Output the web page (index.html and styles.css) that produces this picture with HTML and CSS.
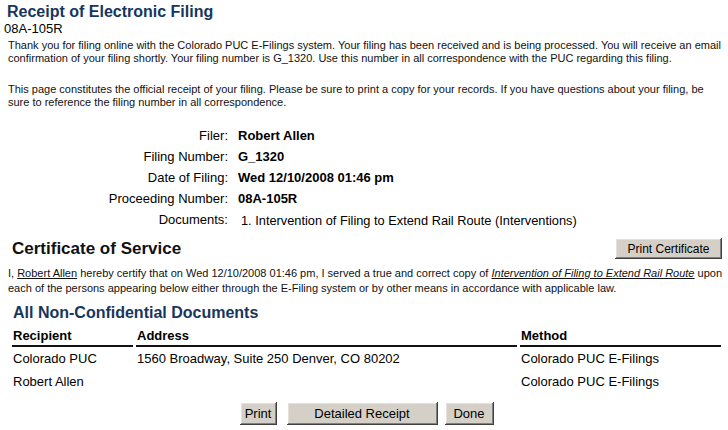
FILE: index.html
```html
<!DOCTYPE html>
<html lang="en">
<head>
    <meta charset="UTF-8">
    <title>Receipt of Electronic Filing</title>
    <link rel="stylesheet" href="styles.css">
</head>
<body>
    <div class="page">
        <h1 class="title">Receipt of Electronic Filing</h1>
        <div class="proceeding">08A-105R</div>

        <p class="note">Thank you for filing online with the Colorado PUC E-Filings system. Your filing has been received and is being processed. You will receive an email confirmation of your filing shortly. Your filing number is G_1320. Use this number in all correspondence with the PUC regarding this filing.</p>
        <p class="note">This page constitutes the official receipt of your filing. Please be sure to print a copy for your records. If you have questions about your filing, be sure to reference the filing number in all correspondence.</p>

        <div class="details">
            <span class="label">Filer:</span>
            <span class="value">Robert Allen</span>
            <span class="label">Filing Number:</span>
            <span class="value">G_1320</span>
            <span class="label">Date of Filing:</span>
            <span class="value">Wed 12/10/2008 01:46 pm</span>
            <span class="label">Proceeding Number:</span>
            <span class="value">08A-105R</span>
            <span class="label">Documents:</span>
            <span class="value doc">1. Intervention of Filing to Extend Rail Route (Interventions)</span>
        </div>

        <div class="cert-head">
            <h2 class="cert-title">Certificate of Service</h2>
            <button class="btn btn-cert">Print Certificate</button>
        </div>
        <p class="note cert-text">I, <u>Robert Allen</u> hereby certify that on Wed 12/10/2008 01:46 pm, I served a true and correct copy of <u><i>Intervention of Filing to Extend Rail Route</i></u> <span>upon </span><span>each of the persons appearing below either through the E-Filing system or by other means in accordance with applicable law.</span></p>

        <h2 class="section">All Non-Confidential Documents</h2>
        <table class="recipients">
            <thead>
                <tr>
                    <th class="col-name">Recipient</th>
                    <th class="col-addr">Address</th>
                    <th class="col-method">Method</th>
                </tr>
            </thead>
            <tbody>
                <tr>
                    <td>Colorado PUC</td>
                    <td>1560 Broadway, Suite 250 Denver, CO 80202</td>
                    <td>Colorado PUC E-Filings</td>
                </tr>
                <tr>
                    <td>Robert Allen</td>
                    <td></td>
                    <td>Colorado PUC E-Filings</td>
                </tr>
            </tbody>
        </table>

        <div class="actions">
            <button class="btn btn-print">Print</button>
            <button class="btn btn-wide">Detailed Receipt</button>
            <button class="btn btn-done">Done</button>
        </div>
    </div>
</body>
</html>
```

FILE: styles.css
```css
* {
    margin: 0;
    padding: 0;
    box-sizing: border-box;
}

body {
    font-family: "Liberation Sans", Arial, sans-serif;
    background: white;
    color: black;
}

.page {
    padding: 3px 2px 3px 4px;
    width: 728px;
}

.title {
    font-size: 16px;
    font-weight: bold;
    color: #17365d;
    margin-left: 3px;
    line-height: 18px;
}

.proceeding {
    font-size: 13px;
    line-height: 15px;
}

.note {
    font-size: 11px;
    line-height: 13px;
    margin: 3px 0 0 4px;
    color: #111;
}

.note + .note {
    margin-top: 18px;
}

.details {
    display: grid;
    grid-template-columns: 224px auto;
    column-gap: 10px;
    row-gap: 5px;
    margin-top: 19px;
    font-size: 13px;
    line-height: 16px;
}

.label {
    text-align: right;
}

.value {
    font-weight: bold;
}

.value.doc {
    font-weight: normal;
    font-size: 12.8px;
    padding-left: 3px;
    padding-top: 1px;
}

.cert-head {
    display: flex;
    justify-content: space-between;
    align-items: center;
    margin-top: 9px;
    padding: 0 4px 0 8px;
}

.cert-title {
    font-size: 17px;
    font-weight: bold;
    color: #111;
}

.btn {
    font-family: "Liberation Sans", Arial, sans-serif;
    font-size: 12px;
    height: 21px;
    padding: 0 14px;
    background: #d4d0c8;
    border: none;
    color: black;
    box-shadow: inset -1px -1px #404040, inset 1px 1px #ffffff, inset -2px -2px #808080, inset 2px 2px #e4e0d8;
    cursor: pointer;
}

.btn-cert {
    width: 107px;
    padding: 0;
}

.cert-text {
    margin-top: 7px;
    line-height: 15px;
}

.section {
    font-size: 16px;
    font-weight: bold;
    color: #17365d;
    margin: 7px 0 0 9px;
    line-height: 19px;
}

.recipients {
    border-collapse: separate;
    border-spacing: 3px 0;
    margin: 4px 0 0 5px;
    width: 715px;
    font-size: 13px;
}

.recipients th {
    text-align: left;
    font-weight: bold;
    border-bottom: 2px solid #111;
    padding: 2px 1px 1px 1px;
    line-height: 16px;
}

.recipients td {
    padding: 0 1px;
    height: 23px;
    line-height: 16px;
}

.col-name {
    width: 121px;
}

.col-addr {
    width: 381px;
}

.actions {
    display: flex;
    justify-content: center;
    margin-top: 9px;
    padding-left: 3px;
}

.actions .btn {
    font-size: 13px;
    height: 23px;
    padding: 0;
}

.actions .btn-print {
    width: 37px;
}

.actions .btn-wide {
    width: 151px;
    margin: 0 7px 0 10px;
}

.actions .btn-done {
    width: 49px;
}
```
